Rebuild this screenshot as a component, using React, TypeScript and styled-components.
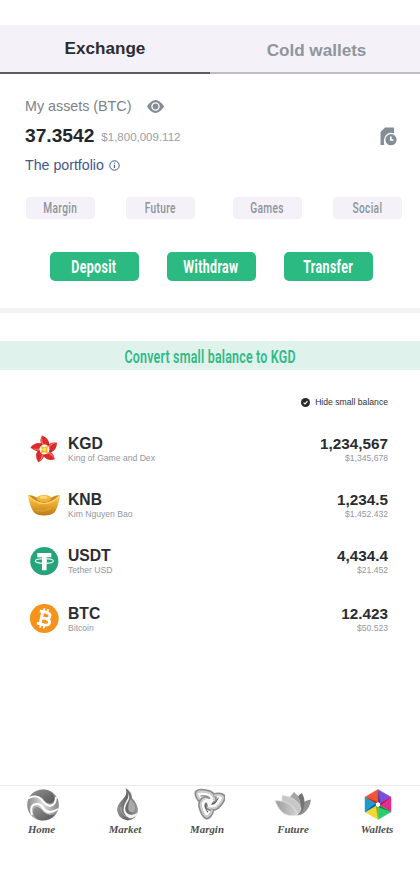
import React from "react";
import styled, { createGlobalStyle } from "styled-components";

const GlobalStyle = createGlobalStyle`
  * { box-sizing: border-box; }
  body { margin: 0; background: #fff; font-family: "Liberation Sans", Arial, sans-serif; }
  svg { display: block; flex: none; }
`;

const Screen = styled.main`
  width: 420px;
  height: 886px;
  padding-top: 25px;
  display: flex;
  flex-direction: column;
  background: #fff;
  overflow: hidden;
`;

const Tabs = styled.nav`
  display: grid;
  grid-template-columns: 1fr 1fr;
  height: 49px;
`;

const Tab = styled.button<{ $active?: boolean }>`
  border: 0;
  border-bottom: 2px solid ${(p) => (p.$active ? "#5c5d60" : "#bdbcc0")};
  background: #f4f2f8;
  padding: ${(p) => (p.$active ? "1px 0 0" : "4px 0 0 3px")};
  font: bold 17.1px "Liberation Sans", Arial, sans-serif;
  color: ${(p) => (p.$active ? "#2b2c33" : "#8f959e")};
`;

const Summary = styled.section`
  display: flex;
  justify-content: space-between;
  height: 123px;
  padding: 23px 23px 0 25px;
`;

const Line = styled.div<{ $height: number; $gap: number }>`
  display: flex;
  align-items: center;
  gap: ${(p) => p.$gap}px;
  height: ${(p) => p.$height}px;
  white-space: nowrap;
`;

const Label = styled.span`
  font-size: 14.3px;
  color: #7c828b;
`;

const Total = styled.strong`
  font-size: 19.2px;
  color: #25262b;
`;

const Fiat = styled.span`
  font-size: 11.5px;
  padding-top: 2px;
  color: #999ea6;
`;

const PortfolioLink = styled.span`
  font-size: 14.2px;
  color: #425688;
`;

const HistoryButton = styled.div`
  padding-top: 30px;
`;

const Chips = styled.div`
  display: flex;
  height: 55px;
  padding-left: 26px;
`;

const Chip = styled.button<{ $after: number }>`
  display: flex;
  align-items: center;
  justify-content: center;
  width: 69px;
  height: 22px;
  margin-right: ${(p) => p.$after}px;
  padding: 2px 0 0;
  flex: none;
  border: 0;
  border-radius: 4px;
  background: #f4f2f8;
  color: #8d929b;
`;

const Actions = styled.div`
  display: flex;
  gap: 28.500px;
  height: 56px;
  padding-left: 50px;
`;

const ActionButton = styled.button`
  display: flex;
  align-items: center;
  justify-content: center;
  width: 88.500px;
  height: 29px;
  padding: 3px 0 0;
  flex: none;
  border: 0;
  border-radius: 5px;
  background: #2bbb82;
  color: #fff;
`;

const Condensed = styled.span<{ $size: number; $scale: number; $weight?: number; $spacing?: number }>`
  display: block;
  font: ${(p) => p.$weight ?? 700} ${(p) => p.$size}px/1 Roboto, "Liberation Sans", sans-serif;
  letter-spacing: ${(p) => p.$spacing ?? 0}px;
  white-space: nowrap;
  transform: scaleX(${(p) => p.$scale});
`;

const Divider = styled.div`
  height: 5px;
  flex: none;
  background: #f3f3f6;
`;

const ConvertBanner = styled.div`
  display: flex;
  align-items: center;
  justify-content: center;
  height: 29px;
  margin-top: 28px;
  padding-top: 2px;
  flex: none;
  background: #dff3ec;
  color: #31b987;
`;

const HideRow = styled.div`
  display: flex;
  align-items: center;
  justify-content: flex-end;
  gap: 5px;
  height: 20px;
  margin-top: 22px;
  padding-right: 32px;
  font-size: 8.65px;
  color: #303136;
`;

const AssetList = styled.div`
  display: grid;
  grid-template-rows: 56px 56px 58px 56px;
  margin-top: 22px;
  padding: 0 32px 0 27px;
`;

const AssetRow = styled.div`
  display: grid;
  grid-template-columns: 41px 1fr auto;
  align-items: start;
`;

const IconCell = styled.div`
  width: 34px;
  height: 34px;
`;

const AssetText = styled.div<{ $end?: boolean }>`
  display: flex;
  flex-direction: column;
  align-items: ${(p) => (p.$end ? "flex-end" : "flex-start")};
`;

const Symbol = styled.strong<{ $size?: number }>`
  font-size: ${(p) => p.$size ?? 15.7}px;
  line-height: 19px;
  color: #2b2c31;
`;

const Detail = styled.span`
  font-size: 8.6px;
  line-height: 10px;
  color: #9297a0;
`;

const BottomNav = styled.nav`
  display: grid;
  grid-template-columns: 83px 84px 80px 92px 76px;
  height: 101px;
  margin-top: auto;
  border-top: 1px solid #ececef;
`;

const NavItem = styled.div`
  display: flex;
  flex-direction: column;
  align-items: center;
  padding-top: 2px;
  font: italic bold 10.9px/12px "Liberation Serif", "Times New Roman", serif;
  color: #505050;
`;

const NavIcon = styled.div<{ $shift?: number }>`
  height: 35px;
  margin-left: ${(p) => p.$shift ?? 0}px;
`;

function EyeIcon() {
  return (
    <svg width="17" height="13" viewBox="0 0 17 13">
      <path d="M0 6.500Q4 0 8.500 0T17 6.500Q13 13 8.500 13T0 6.500Z" fill="#858c96" />
      <circle cx="8.500" cy="6.500" r="4.200" fill="#fff" />
      <circle cx="8.500" cy="6.500" r="2.900" fill="#858c96" />
    </svg>
  );
}

function InfoIcon() {
  return (
    <svg width="11" height="11" viewBox="0 0 11 11" fill="none" stroke="#425688">
      <circle cx="5.500" cy="5.500" r="4.700" />
      <path d="M5.500 4.800V8M5.500 2.700V3.800" strokeWidth="1.100" />
    </svg>
  );
}

function HistoryIcon() {
  return (
    <svg width="17" height="19" viewBox="0 0 17 19">
      <path d="M0.500 18V5L5 .5H14V6.200Q9 5 6 8Q3 12 4.300 18Z" fill="#858d97" />
      <circle cx="11" cy="12.700" r="5.600" fill="#858d97" />
      <path d="M10.800 9.500V13H13.600" fill="none" stroke="#fff" strokeWidth="1.700" />
    </svg>
  );
}

function CheckIcon() {
  return (
    <svg width="9" height="9" viewBox="0 0 9 9">
      <circle cx="4.500" cy="4.500" r="4.500" fill="#292a2f" />
      <path d="M2.600 4.600L4 5.900L6.500 3.200" fill="none" stroke="#fff" strokeWidth="1.100" />
    </svg>
  );
}

function StarIcon() {
  return (
    <svg width="34" height="34" viewBox="0 0 34 34">
      {[0, 72, 144, 216, 288].map((angle) => (
        <g key={angle} transform={`rotate(${angle} 17.500 15.500)`}>
          <path d="M15 1.500Q22 4 22.300 10.500L20.500 13L15.500 12Q11.500 8 15 1.500Z" fill="#db2c2a" />
          <path d="M15 1.500Q12.500 7.500 15.500 11L18 12Q14.500 7 15 1.500Z" fill="#ee6862" />
          <path d="M22.300 10.500Q20.500 10 18 12.500" fill="none" stroke="#a91a20" strokeWidth="1" />
        </g>
      ))}
      <circle cx="17.500" cy="15.500" r="5" fill="#fff6e7" />
      <path d="M14 12.200L17.500 13.300L21 11.500L20.200 15.500L21 19L17 18.300L13.800 19.200L14.800 15.500Z" fill="#edb526" />
      <circle cx="17.300" cy="15.500" r="1.800" fill="#fbe35d" />
    </svg>
  );
}

function IngotIcon() {
  return (
    <svg width="34" height="34" viewBox="0 0 34 34">
      <defs>
        <linearGradient id="gold" x1="0" y1="0" x2="0" y2="1">
          <stop offset="0" stopColor="#ffd35b" />
          <stop offset=".55" stopColor="#e4a12b" />
          <stop offset="1" stopColor="#b97817" />
        </linearGradient>
      </defs>
      <g transform="translate(0 -1.500)">
        <path d="M1 6.500Q6 6 9 9H25Q28 6 33 6.500Q31.500 18 27.500 24Q24 27 17 27Q10 27 7 24Q2.500 18 1 6.500Z" fill="url(#gold)" />
        <path d="M2 7Q9 14.500 17 14.500Q25 14.500 32 7Q28 6.500 25 9H9Q6 6.500 2 7Z" fill="#c8862a" />
        <ellipse cx="17" cy="10" rx="7.300" ry="3.500" fill="#efb43c" />
        <ellipse cx="16.500" cy="8.700" rx="4" ry="1.500" fill="#ffda72" />
        <path d="M1.700 7.500Q9 15 17 15Q25 15 32.300 7.500" fill="none" stroke="#ffd365" strokeWidth="1.200" />
        <path d="M9 22Q16 24 24 20" fill="none" stroke="#f3bd4a" strokeWidth="1" opacity=".55" />
      </g>
    </svg>
  );
}

function TetherIcon() {
  return (
    <svg width="34" height="34" viewBox="0 0 34 34">
      <circle cx="17.300" cy="15.200" r="14.100" fill="#27a37c" />
      <path d="M10.300 7H24.300V11.200H19.600V24.300H15V11.200H10.300Z" fill="#fff" />
      <ellipse cx="17.300" cy="15" rx="9" ry="2.300" fill="none" stroke="#e7f6f1" strokeWidth="1.200" />
      <path d="M15 14H19.600V18.500H15Z" fill="#fff" />
    </svg>
  );
}

function BitcoinIcon() {
  return (
    <svg width="34" height="34" viewBox="0 0 34 34">
      <circle cx="17.300" cy="14.500" r="14.400" fill="#f7931a" />
      <g transform="rotate(13 17.300 14.500)" fill="none" stroke="#fff">
        <path d="M11.200 8H18Q22.300 8.100 22.300 11Q22.300 14.200 18 14.200H14.500M18 14.200Q23.300 14.300 23.300 17.500Q23.300 20.700 18.500 20.700H11.200M14.300 8V20.700" strokeWidth="2.900" />
        <path d="M15.300 4.500V8M18.900 4.500V8M15.300 20.500V24.300M18.900 20.500V24.300" strokeWidth="1.900" />
      </g>
    </svg>
  );
}

function GlobeIcon() {
  return (
    <svg width="34" height="34" viewBox="0 0 34 34">
      <defs>
        <linearGradient id="steel"><stop stopColor="#8b8b8b" /><stop offset=".5" stopColor="#dedede" /><stop offset="1" stopColor="#858585" /></linearGradient>
        <linearGradient id="shade" x1="0" y1="0" x2="1" y2="1"><stop stopColor="#929292" /><stop offset="1" stopColor="#555" /></linearGradient>
      </defs>
      <circle cx="17" cy="17" r="15.800" fill="url(#steel)" />
      <path d="M4 8Q10 1 18 1.500Q25 2 28 7Q30 12 26 15Q21 17 17 11Q12 6 4 8Z" fill="url(#shade)" />
      <path d="M7.500 27Q6 18 12 19Q15 20 18 24Q23 29 30 25.500Q24 33 16 32.500Q10 32 7.500 27Z" fill="url(#shade)" />
      <path d="M2 10.500Q10 6 15 11Q19 17 24 18Q30 17 30 9" fill="none" stroke="#fff" strokeWidth="1.800" />
      <path d="M6 27Q3 16 11 16Q15 16 18 21Q23 27 32 21" fill="none" stroke="#fff" strokeWidth="2" />
    </svg>
  );
}

function FlameIcon() {
  return (
    <svg width="26" height="34" viewBox="0 0 26 34">
      <defs>
        <linearGradient id="flame"><stop stopColor="#949494" /><stop offset=".45" stopColor="#686868" /><stop offset="1" stopColor="#9b9b9b" /></linearGradient>
      </defs>
      <path d="M10.500 0Q17 4 17 10Q23 16 23 23Q21 32 12.500 32.500Q3 31 2 22Q2 17 8 11Q13 6 10.500 0Z" fill="url(#flame)" />
      <path d="M12.500 4Q16 10 12 15Q9 20 11 24Q15 30 24 24Q20 31 14 30Q7 26 9 18Q11 13 13 10Q14 7 12.500 4Z" fill="#f5f5f5" />
      <path d="M15.500 11Q21 17 20 22Q18 26 14 23Q12 19 15.500 11Z" fill="#aaa" />
      <path d="M6 19Q5 26 12 29" fill="none" stroke="#aaa" strokeWidth="1" />
    </svg>
  );
}

function KnotIcon() {
  return (
    <svg width="32" height="34" viewBox="0 0 32 34" fill="none">
      {[0, 120, 240].map((angle) => (
        <g key={angle} transform={`rotate(${angle} 16 14)`}>
          <path d="M8 14Q2 8 3.500 4Q7 1 17 4Q23 7 22 13Q21 16 18 15" stroke="#8c8c8c" strokeWidth="3.500" />
          <path d="M8 13Q3 8 4.500 4.500Q8 2 17 5Q22 8 21 13" stroke="#cfcfcf" strokeWidth="2" />
          <path d="M7.500 8Q14 7 16 11" stroke="#555" strokeWidth=".9" />
        </g>
      ))}
      <path d="M12 10L21 12L16 20Z" fill="#f6f6f6" />
    </svg>
  );
}

function LotusIcon() {
  return (
    <svg width="38" height="34" viewBox="0 0 38 34">
      <defs>
        <linearGradient id="petal"><stop stopColor="#9b9b9b" /><stop offset="1" stopColor="#d4d4d4" /></linearGradient>
      </defs>
      <path d="M21 27Q23 14 37 11.500Q36 20 30 25Q26 28 21 27Z" fill="#929292" />
      <path d="M19 26Q17 12 28 5Q33 14 28 24Q25 27 21 27Z" fill="#747474" />
      <path d="M16 22Q11 13 20 4Q29 11 26 22L22 27Z" fill="#a5a5a5" />
      <path d="M20 27Q6 23 8 7Q23 9 27 20Q27 25 22 27Z" fill="#c7c7c7" stroke="#eee" strokeWidth=".5" />
      <path d="M21 27.500Q7 30 1 12.500Q17 12 24 26Z" fill="url(#petal)" stroke="#efefef" strokeWidth=".6" />
    </svg>
  );
}

const SHUTTER_COLORS = ["#7650dc", "#e52b8b", "#28ce6b", "#f1d832", "#189dce", "#ef5438"];
const SHUTTER_SHADES = ["#433089", "#a41850", "#12813f", "#b8981b", "#105b91", "#aa302d"];

function ShutterIcon() {
  return (
    <svg width="30" height="34" viewBox="0 0 30 34">
      {SHUTTER_COLORS.map((color, i) => (
        <g key={color} transform={`rotate(${i * 60} 15 16.500)`}>
          <path d="M15 1.500L28 9L17.200 15.300L15 14Z" fill={color} stroke={color} strokeWidth=".4" />
          <path d="M15 1.500L17.200 15.300L15 14Z" fill={SHUTTER_SHADES[i]} />
        </g>
      ))}
      <path d="M15 14.200L17.100 15.300V17.800L15 19L12.900 17.800V15.300Z" fill="#fff" />
    </svg>
  );
}

const chips = [
  { name: "Margin", after: 31 },
  { name: "Future", after: 38 },
  { name: "Games", after: 31 },
  { name: "Social", after: 0 },
];

const assets = [
  { symbol: "KGD", name: "King of Game and Dex", amount: "1,234,567", value: "$1,345,678", icon: <StarIcon /> },
  { symbol: "KNB", name: "Kim Nguyen Bao", amount: "1,234.5", value: "$1,452.432", icon: <IngotIcon /> },
  { symbol: "USDT", name: "Tether USD", amount: "4,434.4", value: "$21.452", icon: <TetherIcon /> },
  { symbol: "BTC", name: "Bitcoin", amount: "12.423", value: "$50.523", icon: <BitcoinIcon /> },
];

const destinations = [
  { name: "Home", icon: <GlobeIcon />, shift: 3 },
  { name: "Market", icon: <FlameIcon />, shift: 5 },
  { name: "Margin", icon: <KnotIcon />, shift: 3 },
  { name: "Future", icon: <LotusIcon />, shift: 0 },
  { name: "Wallets", icon: <ShutterIcon />, shift: 1 },
];

export default function App() {
  return (
    <>
      <GlobalStyle />
      <Screen>
        <Tabs>
          <Tab $active>Exchange</Tab>
          <Tab>Cold wallets</Tab>
        </Tabs>
        <Summary>
          <div>
            <Line $height={18} $gap={16}><Label>My assets (BTC)</Label><EyeIcon /></Line>
            <Line $height={41} $gap={7}><Total>37.3542</Total><Fiat>$1,800,009.112</Fiat></Line>
            <Line $height={18} $gap={5}><PortfolioLink>The portfolio</PortfolioLink><InfoIcon /></Line>
          </div>
          <HistoryButton><HistoryIcon /></HistoryButton>
        </Summary>
        <Chips>
          {chips.map((chip) => (
            <Chip key={chip.name} $after={chip.after}><Condensed $size={14.5} $scale={0.7} $spacing={0.5} $weight={500}>{chip.name}</Condensed></Chip>
          ))}
        </Chips>
        <Actions>
          {["Deposit", "Withdraw", "Transfer"].map((name) => (
            <ActionButton key={name}><Condensed $size={17.5} $scale={0.71} $spacing={0.5}>{name}</Condensed></ActionButton>
          ))}
        </Actions>
        <Divider />
        <ConvertBanner><Condensed $size={18} $scale={0.69} $spacing={0.3} $weight={600}>Convert small balance to KGD</Condensed></ConvertBanner>
        <HideRow><CheckIcon />Hide small balance</HideRow>
        <AssetList>
          {assets.map((asset) => (
            <AssetRow key={asset.symbol}>
              <IconCell>{asset.icon}</IconCell>
              <AssetText><Symbol>{asset.symbol}</Symbol><Detail>{asset.name}</Detail></AssetText>
              <AssetText $end><Symbol $size={15.3}>{asset.amount}</Symbol><Detail>{asset.value}</Detail></AssetText>
            </AssetRow>
          ))}
        </AssetList>
        <BottomNav>
          {destinations.map((item) => (
            <NavItem key={item.name}><NavIcon $shift={item.shift}>{item.icon}</NavIcon>{item.name}</NavItem>
          ))}
        </BottomNav>
      </Screen>
    </>
  );
}
